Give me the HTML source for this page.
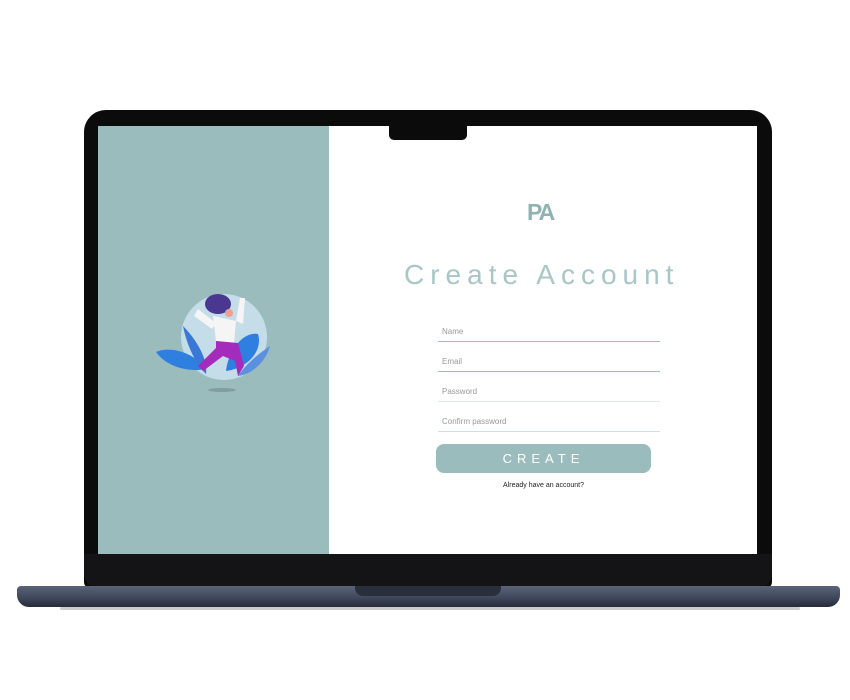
<!DOCTYPE html>
<html><head><meta charset="utf-8"><style>
body{margin:0;width:850px;height:700px;background:#fff;position:relative;overflow:hidden;font-family:"Liberation Sans",sans-serif}
.bezel{position:absolute;left:84px;top:110px;width:688px;height:478px;background:#0b0b0c;border-radius:22px 22px 6px 6px}
.chin{position:absolute;left:84px;top:554px;width:688px;height:34px;background:#141416;border-radius:0 0 14px 14px}
.screen{position:absolute;left:98px;top:126px;width:659px;height:428px;background:#fff;overflow:hidden}
.left{position:absolute;left:0;top:0;width:231px;height:428px;background:#9bbcbc}
.notch{position:absolute;left:389px;top:124px;width:78px;height:16px;background:#0b0b0c;border-radius:0 0 5px 5px}
.base{position:absolute;left:17px;top:586px;width:823px;height:21px;background:linear-gradient(#5a6378,#3d4559 60%,#262b38);border-radius:4px 4px 12px 12px}
.lip{position:absolute;left:355px;top:586px;width:146px;height:10px;background:#2a2f3c;border-radius:0 0 8px 8px}
.shadow{position:absolute;left:60px;top:607px;width:740px;height:3px;background:#ccc;border-radius:2px}
.t{position:absolute;color:#a8c6c6}
.f{position:absolute;left:438px;width:222px;height:1px;background:#9bbdbd}
.lbl{position:absolute;left:442px;font-size:8px;color:#999}
</style></head><body>
<div class="bezel"></div>
<div class="chin"></div>
<div class="screen"><div class="left">
<svg width="231" height="428" viewBox="0 0 231 428" style="position:absolute;left:0;top:0">
<circle cx="126" cy="211" r="43" fill="#c5dde9"/>
<ellipse cx="124" cy="264" rx="14" ry="2" fill="#7f9ea0"/>
<path d="M58 226 C70 220 95 225 108 243 C95 246 70 243 58 226Z" fill="#2f7fe0"/>
<path d="M85 200 C100 215 110 235 108 248 C95 235 88 215 85 200Z" fill="#3a78d8"/>
<path d="M128 245 C130 225 145 205 160 208 C165 225 150 242 128 245Z" fill="#2f7fe0"/>
<path d="M140 250 C150 235 165 225 172 220 C168 235 155 248 140 250Z" fill="#5b8fe0"/>
<path d="M115 190 L138 195 L136 217 L118 215Z" fill="#f5f5f5"/>
<path d="M100 183 L118 197 L114 203 L96 190Z" fill="#f5f5f5"/>
<path d="M138 195 L142 172 L147 172 L145 198Z" fill="#f5f5f5"/>
<path d="M118 215 L140 217 L146 240 L140 250 L137 235 L125 230 L105 245 L100 240 L118 222Z" fill="#a52bbd"/>
<ellipse cx="120" cy="178" rx="13" ry="10" fill="#4a3890"/>
<circle cx="131" cy="187" r="4" fill="#f0a090"/>
</svg>
</div></div>
<div class="notch"></div>
<div class="base"></div><div class="lip"></div><div class="shadow"></div>
<div class="t" style="left:527px;top:199px;font-size:23px;font-weight:bold;letter-spacing:-2px;color:#8fb3b3">PA</div>
<div class="t" style="left:404px;top:259px;font-size:28px;letter-spacing:6px;font-weight:300">Create Account</div>
<div class="lbl" style="top:327px">Name</div><div class="f" style="top:341px"></div>
<div class="lbl" style="top:357px">Email</div><div class="f" style="top:371px"></div>
<div class="lbl" style="top:387px">Password</div><div class="f" style="top:401px;background:#dde8e8"></div>
<div class="lbl" style="top:417px">Confirm password</div><div class="f" style="top:431px;background:#cfe0e0"></div>
<div style="position:absolute;left:436px;top:444px;width:215px;height:29px;background:#9bbcbc;border-radius:8px;color:#fff;font-size:13px;letter-spacing:5px;text-align:center;line-height:29px">CREATE</div>
<div style="position:absolute;left:436px;top:482px;width:215px;text-align:center;font-size:7px;color:#222">Already have an account?</div>
</body></html>
